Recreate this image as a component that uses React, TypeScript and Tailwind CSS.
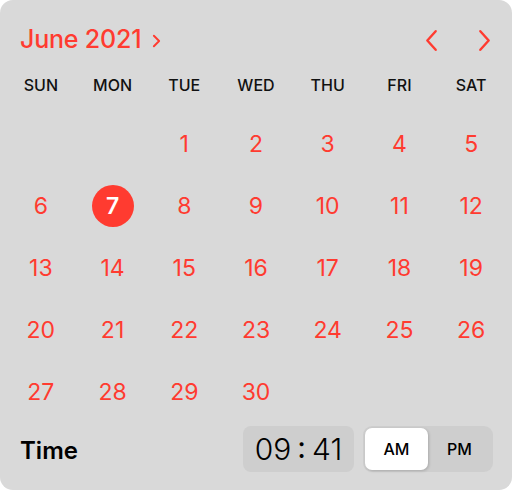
import { memo } from 'react';

const WEEKDAYS = ['SUN', 'MON', 'TUE', 'WED', 'THU', 'FRI', 'SAT'];

// June 2021 starts on a Tuesday
const DAYS: (number | null)[] = [null, null, ...Array.from({ length: 30 }, (_, i) => i + 1)];

const Chevron = ({ dir, className }: { dir: 'left' | 'right'; className?: string }) => (
  <svg viewBox="0 0 14 24" className={className} fill="none">
    <path
      d={dir === 'left' ? 'M11.5 2 L2.5 12 L11.5 22' : 'M2.5 2 L11.5 12 L2.5 22'}
      stroke="#ff3b30"
      strokeWidth="2.6"
      strokeLinecap="round"
      strokeLinejoin="round"
    />
  </svg>
);

const DatePicker = memo(() => {
  const selected = 7;

  return (
    <div className="h-full rounded-[13px] bg-[#d9d9d9] flex flex-col font-['Inter',sans-serif]">
      {/* Header */}
      <div className="mt-[14px] h-[52px] flex items-center justify-between pl-[20px] pr-[21px]">
        <button className="flex items-center gap-[11px] text-[#ff3b30]">
          <span className="text-[25px] font-medium tracking-[-0.2px]">June 2021</span>
          <svg viewBox="0 0 10 16" className="w-[9px] h-[14px] mt-[1px]" fill="none">
            <path d="M2 2 L8 8 L2 14" stroke="#ff3b30" strokeWidth="2.2" strokeLinecap="round" strokeLinejoin="round" />
          </svg>
        </button>
        <div className="flex items-center gap-[40px]">
          <button><Chevron dir="left" className="w-[13px] h-[23px]" /></button>
          <button><Chevron dir="right" className="w-[13px] h-[23px]" /></button>
        </div>
      </div>

      {/* Weekdays */}
      <div className="grid grid-cols-7 px-[5px] h-[47px] pt-[9px]">
        {WEEKDAYS.map((d) => (
          <div key={d} className="text-center text-[16px] leading-[20px] font-medium text-[#111]">
            {d}
          </div>
        ))}
      </div>

      {/* Days */}
      <div className="grid grid-cols-7 px-[5px] auto-rows-[62px]">
        {DAYS.map((day, i) => (
          <div key={i} className="flex items-center justify-center">
            {day === selected ? (
              <span className="w-[42px] h-[42px] rounded-full bg-[#ff3b30] text-white text-[23px] font-semibold flex items-center justify-center">
                {day}
              </span>
            ) : (
              day && <span className="text-[23px] text-[#ff3b30]">{day}</span>
            )}
          </div>
        ))}
      </div>

      {/* Time */}
      <div className="mt-[3px] h-[46px] flex items-center pl-[20px] pr-[19px]">
        <span className="text-[24px] font-semibold text-black flex-1 pt-[4px]">Time</span>
        <div className="w-[111px] h-[46px] rounded-[8px] bg-[#cecece] flex items-center justify-center text-[30px] font-light text-black">
          <span>09</span>
          <span className="mx-[6px] pb-[3px] font-normal">:</span>
          <span>41</span>
        </div>
        <div className="ml-[9px] w-[130px] h-[46px] rounded-[9px] bg-[#cecece] p-[2px] flex">
          <button className="w-[63px] h-full rounded-[7px] bg-white shadow-[1px_1px_3px_rgba(0,0,0,0.18)] text-[16px] font-medium text-black">
            AM
          </button>
          <button className="flex-1 h-full text-[16px] font-medium text-black">PM</button>
        </div>
      </div>
    </div>
  );
});

DatePicker.displayName = 'DatePicker';

export default function App() {
  return (
    <div className="w-[512px] h-[490px] bg-white">
      <DatePicker />
    </div>
  );
}
